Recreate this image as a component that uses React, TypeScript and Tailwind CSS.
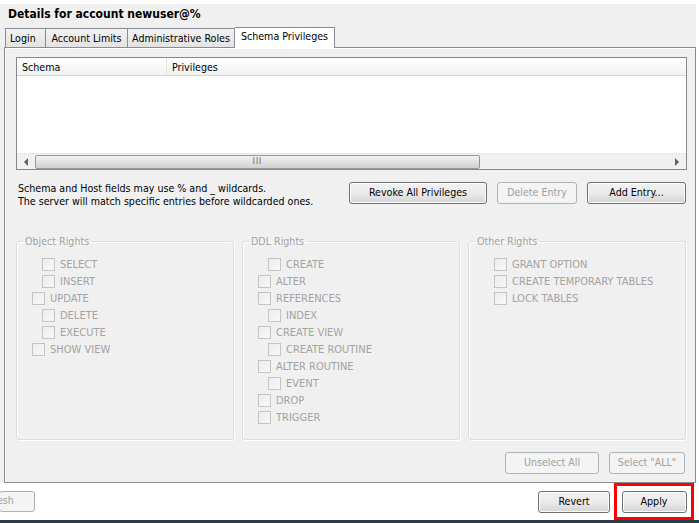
import React from "react";

const font = { fontFamily: '"DejaVu Sans Condensed", "Liberation Sans", sans-serif' };

function Check({ label, indent }: { label: string; indent?: boolean }) {
  return (
    <div className={`flex items-center h-[17px] ${indent ? "pl-[24px]" : "pl-[14px]"}`}>
      <div className="w-[13px] h-[13px] border border-[#c4c4c4] bg-gradient-to-br from-[#ececec] to-[#f8f8f8] shrink-0" />
      <span className="ml-[5px] text-[#a3a3a3] text-[11px] leading-none">{label}</span>
    </div>
  );
}

function Group({ title, items }: { title: string; items: [string, boolean][] }) {
  return (
    <fieldset className="w-[218px] h-[205px] border border-[#d5dfe5] rounded-[3px] shadow-[inset_1px_1px_0_#fff,1px_1px_0_#fff] pt-[8px] px-[1px]">
      <legend className="ml-[5px] px-[2px] text-[10.6px] text-[#a3a3a3] leading-[13px]">{title}</legend>
      {items.map(([l, i]) => (
        <Check key={l} label={l} indent={i} />
      ))}
    </fieldset>
  );
}

function Btn({ children, w, disabled }: { children: React.ReactNode; w: string; disabled?: boolean }) {
  return (
    <div
      className={`${w} h-[22px] flex items-center justify-center rounded-[3px] border text-[10.6px] ${
        disabled
          ? "border-[#adb2b5] bg-[#f4f4f4] text-[#a0a0a0]"
          : "border-[#707070] bg-gradient-to-b from-[#f2f2f2] via-[#ebebeb] to-[#d5d5d5] text-black shadow-[inset_0_0_0_1px_#fcfcfc]"
      }`}
    >
      {children}
    </div>
  );
}

export default function App() {
  return (
    <div className="w-[699px] h-[523px] bg-white flex flex-col overflow-hidden text-black" style={font}>
      <div className="mt-[4px] w-[696px] bg-[#f0f0f0] flex flex-col">
        <div className="h-[22px] pl-[8px] pt-[3px] text-[12px] font-bold leading-[14px]">Details for account newuser@%</div>
        <div className="flex items-end pl-[5px] h-[21px] text-[10.6px]">
          <div className="w-[41px] h-[19px] border border-b-0 border-[#898c95] bg-gradient-to-b from-[#f2f2f2] to-[#e3e3e3] flex items-center pl-[4px] pt-[2px]">Login</div>
          <div className="w-[82px] h-[19px] border border-b-0 border-l-0 border-[#898c95] bg-gradient-to-b from-[#f2f2f2] to-[#e3e3e3] flex items-center justify-center pt-[2px]">Account Limits</div>
          <div className="w-[107px] h-[19px] border border-b-0 border-l-0 border-[#898c95] bg-gradient-to-b from-[#f2f2f2] to-[#e3e3e3] flex items-center justify-center pt-[2px]">Administrative Roles</div>
          <div className="w-[100px] h-[21px] border border-b-0 border-l-0 border-[#898c95] bg-white flex items-center justify-center pb-[2px] -mb-px relative z-10">Schema Privileges</div>
        </div>
        <div className="ml-[4px] w-[692px] h-[436px] border border-[#898c95] shadow-[inset_1px_1px_0_#fff] flex flex-col pl-[11px] pr-[9px] pt-[9px]">
          <div className="w-[671px] h-[113px] border border-[#828790] bg-white flex flex-col">
            <div className="h-[18px] flex bg-gradient-to-b from-white to-[#f1f2f3] border-b border-[#d5d5d5] text-[10.6px] items-center">
              <div className="w-[150px] h-full border-r border-[#e2e3e4] pl-[5px] pt-[2px] flex items-center">Schema</div>
              <div className="pl-[5px] pt-[2px]">Privileges</div>
            </div>
            <div className="flex-1" />
            <div className="h-[16px] bg-[#f0f0f0] flex items-center border-t border-[#e8e8e8]">
              <div className="w-[18px] flex justify-center">
                <div className="w-0 h-0 border-y-[4px] border-y-transparent border-r-[4px] border-r-[#606060]" />
              </div>
              <div className="w-[445px] h-[14px] rounded-[2px] border border-[#979797] bg-gradient-to-b from-[#f3f3f3] to-[#d0d0d0] flex items-center justify-center text-[8px] tracking-[1px] text-[#555] leading-none">III</div>
              <div className="flex-1" />
              <div className="w-[18px] flex justify-center">
                <div className="w-0 h-0 border-y-[4px] border-y-transparent border-l-[4px] border-l-[#606060]" />
              </div>
            </div>
          </div>
          <div className="flex mt-[12px] h-[25px]">
            <div className="pl-[2px] text-[10.6px] leading-[13px] w-[335px]">
              <div>Schema and Host fields may use % and _ wildcards.</div>
              <div>The server will match specific entries before wildcarded ones.</div>
            </div>
            <div className="flex gap-[10px]">
              <Btn w="w-[138px]">Revoke All Privileges</Btn>
              <Btn w="w-[80px]" disabled>Delete Entry</Btn>
              <Btn w="w-[99px]">Add Entry...</Btn>
            </div>
          </div>
          <div className="flex gap-[8px] mt-[28px]">
            <Group
              title="Object Rights"
              items={[
                ["SELECT", true],
                ["INSERT", true],
                ["UPDATE", false],
                ["DELETE", true],
                ["EXECUTE", true],
                ["SHOW VIEW", false],
              ]}
            />
            <Group
              title="DDL Rights"
              items={[
                ["CREATE", true],
                ["ALTER", false],
                ["REFERENCES", false],
                ["INDEX", true],
                ["CREATE VIEW", false],
                ["CREATE ROUTINE", true],
                ["ALTER ROUTINE", false],
                ["EVENT", true],
                ["DROP", false],
                ["TRIGGER", false],
              ]}
            />
            <Group
              title="Other Rights"
              items={[
                ["GRANT OPTION", true],
                ["CREATE TEMPORARY TABLES", true],
                ["LOCK TABLES", true],
              ]}
            />
          </div>
          <div className="flex justify-end gap-[10px] mt-[12px] pr-[1px]">
            <Btn w="w-[94px]" disabled>Unselect All</Btn>
            <Btn w="w-[76px]" disabled>Select "ALL"</Btn>
          </div>
        </div>
      </div>
      <div className="h-[37px] flex items-center">
        <div className="w-[36px] h-[21px] -ml-[1px] mt-[-1px] border border-[#adb2b5] rounded-[3px] bg-[#f4f4f4] text-[#a0a0a0] text-[10.6px] flex items-center overflow-hidden">
          <span className="-ml-[3px]">esh</span>
        </div>
        <div className="flex-1" />
        <div className="mt-[1px] mr-[4px]">
          <Btn w="w-[72px]">Revert</Btn>
        </div>
        <div className="h-[37px] w-[80px] border-[3px] border-[#ff0000] flex items-center justify-center mr-[5px]">
          <Btn w="w-[65px]">Apply</Btn>
        </div>
      </div>
      <div className="h-[3px] bg-[#2b3a4c]" />
    </div>
  );
}
